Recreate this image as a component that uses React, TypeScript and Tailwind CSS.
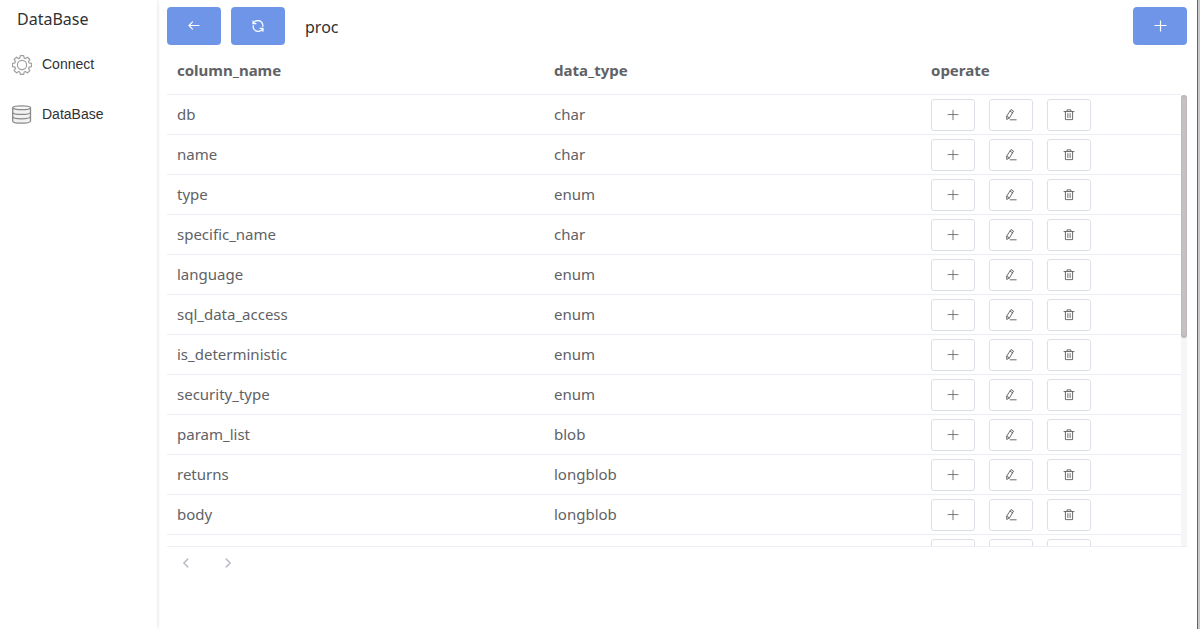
import type { ReactNode } from 'react';

type Column = { name: string; type: string };

const columns: Column[] = [
  { name: 'db', type: 'char' },
  { name: 'name', type: 'char' },
  { name: 'type', type: 'enum' },
  { name: 'specific_name', type: 'char' },
  { name: 'language', type: 'enum' },
  { name: 'sql_data_access', type: 'enum' },
  { name: 'is_deterministic', type: 'enum' },
  { name: 'security_type', type: 'enum' },
  { name: 'param_list', type: 'blob' },
  { name: 'returns', type: 'longblob' },
  { name: 'body', type: 'longblob' },
  { name: '', type: '' },
];

function Icon({ size, children }: { size: 'sm' | 'md'; children: ReactNode }) {
  return (
    <svg
      viewBox="0 0 14 14"
      className={size === 'sm' ? 'size-3' : 'size-3.5'}
      fill="none"
      stroke="currentColor"
      strokeLinecap="round"
      strokeLinejoin="round"
      aria-hidden="true"
    >
      {children}
    </svg>
  );
}

const backPath = <path d="M12 6.500H2M5.500 2.800 2 6.500l3.500 3.700" strokeWidth="1.100" />;
const refreshPath = (
  <path
    d="M2 1.800v2.900h2.900M2.300 4.500A5 5 0 0 1 11.600 5c.3.900.3 1.600.2 2.400M12 12.200V9.300H9.100M11.700 9.500A5 5 0 0 1 2.400 9c-.3-.9-.3-1.600-.2-2.400"
    strokeWidth="1.200"
  />
);
const plusPath = <path d="M7.500 1.500v11M1.500 6.500h12" strokeWidth="1.200" strokeLinecap="butt" />;
const smallPlusPath = <path d="M7 1.500v11M1.200 6.500h11.600" strokeWidth="1" />;
const editPath = (
  <path d="M7.400.8 10 2.400 5.300 10.300 2 12.300l.1-3.700zM6.300 2.800 8.900 4.400M2.200 8.800l3 1.500M6 12.600h7" strokeWidth="1.100" />
);
const trashPath = (
  <path d="M1.200 3h11.600M4.800 2.800V1h4.400v1.800M2.800 3.200v9.200h8.400V3.200M5.700 5.400v4.600M8.300 5.400v4.600" strokeWidth="1.100" />
);

function PrimaryButton({ label, children }: { label: string; children: ReactNode }) {
  return (
    <button
      type="button"
      aria-label={label}
      className="flex h-[38px] w-[54px] items-center justify-center rounded bg-[#6e95e8] text-white"
    >
      {children}
    </button>
  );
}

function RowButton({ label, children }: { label: string; children: ReactNode }) {
  return (
    <button
      type="button"
      aria-label={label}
      className="flex h-8 w-11 items-center justify-center rounded-[3px] border border-[#dcdfe6] bg-white text-[#606266]"
    >
      <Icon size="sm">{children}</Icon>
    </button>
  );
}

function GearIcon() {
  return (
    <svg viewBox="0 0 20 20" className="size-5" fill="none" stroke="#a0a0a0" strokeWidth="1.200" strokeLinejoin="round" aria-hidden="true">
      <path d="M8.300.6h3.400l.5 2.500 1.200.5 2.100-1.400 2.400 2.300-1.400 2.100.5 1.300 2.500.4v3.400l-2.500.5-.5 1.200 1.400 2.100-2.400 2.400-2.100-1.400-1.200.5-.5 2.400H8.300L7.800 17l-1.200-.5-2.100 1.400-2.400-2.400 1.400-2.100-.5-1.200-2.500-.5V8.300l2.500-.4.500-1.300-1.400-2.100 2.400-2.300 2.100 1.400 1.200-.5z" />
      <circle cx="10" cy="10" r="4.600" />
    </svg>
  );
}

function DatabaseIcon() {
  return (
    <svg viewBox="0 0 20 20" className="size-5" fill="none" stroke="#8a8a8a" strokeWidth="1.300" aria-hidden="true">
      <path
        d="M.7 2.800v13.200c0 1.300 4 2.200 8.900 2.200s8.900-.9 8.900-2.200V2.800"
        fill="#f1f1f1"
      />
      <ellipse cx="9.600" cy="2.800" rx="8.900" ry="1.900" fill="#f7f7f7" />
      <path d="M.7 7.200c0 1.300 4 2.200 8.900 2.200s8.900-.9 8.900-2.200M.7 11.600c0 1.300 4 2.200 8.900 2.200s8.900-.9 8.900-2.200" />
    </svg>
  );
}

function NavLink({ label, icon }: { label: string; icon: ReactNode }) {
  return (
    <a href="#" className="flex h-[50px] items-center gap-2.5 pl-3 font-['Liberation_Sans',sans-serif] text-sm text-[#303133]">
      {icon}
      <span className="pb-0.5">{label}</span>
    </a>
  );
}

export default function App() {
  return (
    <div className="flex min-h-screen bg-white font-['Noto_Sans',sans-serif] text-[#606266]">
      <aside className="w-[157px] shrink-0 shadow-[0_0_4px_rgba(0,0,0,0.15)]">
        <h1 className="h-10 pt-[7px] pl-[17px] text-base leading-6 text-[#303133]">DataBase</h1>
        <nav>
          <NavLink label="Connect" icon={<GearIcon />} />
          <NavLink label="DataBase" icon={<DatabaseIcon />} />
        </nav>
      </aside>

      <main className="min-w-0 flex-1 px-2.5 pt-[7px]">
        <header className="flex items-center gap-2.5">
          <PrimaryButton label="Back">
            <Icon size="md">{backPath}</Icon>
          </PrimaryButton>
          <PrimaryButton label="Refresh">
            <Icon size="md">{refreshPath}</Icon>
          </PrimaryButton>
          <h2 className="flex-1 pt-0.5 pl-2.5 text-base text-[#303133]">proc</h2>
          <PrimaryButton label="Add column">
            <Icon size="md">{plusPath}</Icon>
          </PrimaryButton>
        </header>

        <section className="mt-0.5 flex h-[500px] border-b border-[#ebeef5]">
          <div className="min-w-0 flex-1 overflow-y-auto [scrollbar-width:none]">
            <table className="w-full table-fixed border-separate border-spacing-0 text-left text-[15px]">
              <thead className="sticky top-0 z-10 bg-white text-[#606266]">
                <tr className="h-12">
                  <th className="w-[377px] border-b border-[#ebeef5] px-2.5 font-bold">column_name</th>
                  <th className="w-[377px] border-b border-[#ebeef5] px-2.5 font-bold">data_type</th>
                  <th className="border-b border-[#ebeef5] px-2.5 font-bold">operate</th>
                </tr>
              </thead>
              <tbody>
                {columns.map((column, index) => (
                  <tr key={index} className="h-10">
                    <td className="border-b border-[#ebeef5] px-2.5">{column.name}</td>
                    <td className="border-b border-[#ebeef5] px-2.5">{column.type}</td>
                    <td className="border-b border-[#ebeef5] px-2.5">
                      <div className="flex gap-[14px]">
                        <RowButton label={`Add after ${column.name || 'row'}`}>{smallPlusPath}</RowButton>
                        <RowButton label={`Edit ${column.name || 'row'}`}>{editPath}</RowButton>
                        <RowButton label={`Delete ${column.name || 'row'}`}>{trashPath}</RowButton>
                      </div>
                    </td>
                  </tr>
                ))}
              </tbody>
            </table>
          </div>
          <div className="mt-12 w-1.5 bg-[#f6f6f6]" aria-hidden="true">
            <div className="h-[243px] rounded-full bg-[#cdc7c7] shadow-[inset_0_0_4px_rgba(0,0,0,0.15)]" />
          </div>
        </section>

        <div className="flex gap-[14px] pl-[5px]">
          <button type="button" aria-label="Previous page" className="flex h-8 w-7 items-center justify-center text-[#b9bdc6]">
            <Icon size="sm">
              <path d="M9 2.500 4.500 7 9 11.500" strokeWidth="1.800" />
            </Icon>
          </button>
          <button type="button" aria-label="Next page" className="flex h-8 w-7 items-center justify-center text-[#b9bdc6]">
            <Icon size="sm">
              <path d="m5 2.500 4.500 4.500L5 11.500" strokeWidth="1.800" />
            </Icon>
          </button>
        </div>
      </main>
      <div className="w-[3px] shrink-0 border-l border-[#666666] bg-[#c8c8c8]" aria-hidden="true" />
    </div>
  );
}
